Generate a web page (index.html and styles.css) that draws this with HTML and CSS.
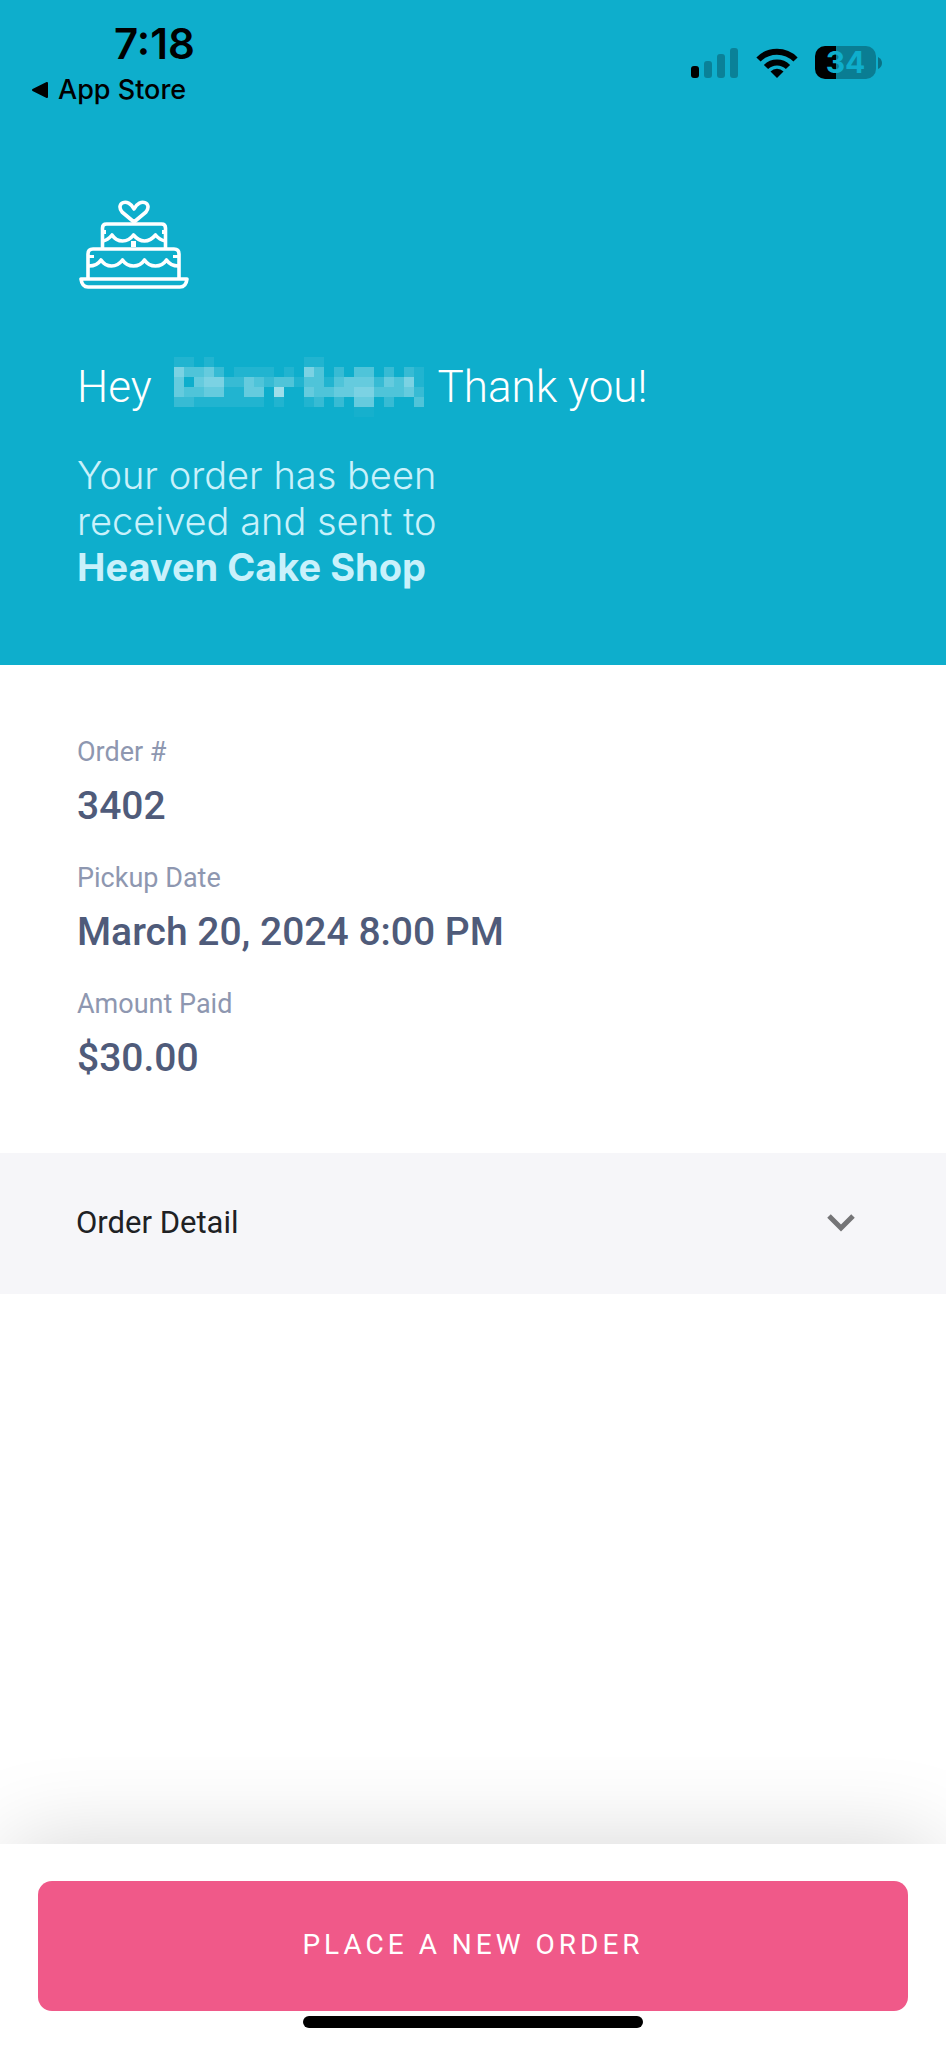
FILE: index.html
```
<!DOCTYPE html>
<html lang="en">
<head>
<meta charset="utf-8">
<meta name="viewport" content="width=device-width, initial-scale=1">
<title>Order received</title>
<link rel="stylesheet" href="styles.css">
</head>
<body>
<div class="page">
  <header class="hero">
    <div class="status">
      <div class="status-left">
        <time class="clock">7:18</time>
        <a class="back" href="#">
          <svg class="back-icon" viewBox="0 0 18 18" aria-hidden="true"><path d="M2 9 16 2v14z" fill="#000" stroke="#000" stroke-width="2" stroke-linejoin="round"/></svg>
          App Store
        </a>
      </div>
      <div class="status-right">
        <svg class="signal" viewBox="0 0 48 30" aria-label="Signal">
          <rect x="0" y="18" width="8" height="12" rx="3"/>
          <g opacity=".25"><rect x="13" y="13" width="8" height="17" rx="3"/><rect x="26" y="6" width="8" height="24" rx="3"/><rect x="39" y="0" width="8" height="30" rx="3"/></g>
        </svg>
        <svg class="wifi" viewBox="0 0 42 30" aria-label="Wi-Fi">
          <g fill="none" stroke="#000" stroke-width="6"><path d="M2.500 11.500a26 26 0 0 1 37 0"/><path d="M10 19a15.500 15.500 0 0 1 22 0"/></g>
          <path d="M21 30l-6.500-6.500a9.200 9.200 0 0 1 13 0z"/>
        </svg>
        <div class="battery">
          <span class="battery-level">34</span>
          <svg class="battery-cap" viewBox="0 0 4 12" aria-hidden="true"><path d="M0 0q4 2 4 6t-4 6z" opacity=".35"/></svg>
        </div>
      </div>
    </div>
    <svg class="cake" viewBox="0 0 110 90" aria-label="Cake">
      <g fill="none" stroke="#fff" stroke-width="3.600" stroke-linejoin="round">
        <path d="M55 22 43 12C36 3 49-3 55 9 61-3 74 3 67 12z"/>
        <path d="M23.500 48V28q0-4 4-4h55q4 0 4 4v20"/>
        <path d="M9 78V54q0-5 5-5h81q5 0 5 5v24"/>
        <path d="M24 41q5-1 9-6 4 6 10.500 6T54.500 35q5 6 11 6t11-6q4 5 10 6"/>
        <path d="M10 66q8 0 12-6 4 6 10.500 6T43.500 60q4 6 11 6t11-6q4 6 11 6t11-6q4 6 12 6"/>
        <path d="M2 79h106q-1 8-7 8H9q-6 0-7-8z"/>
      </g>
      <path fill="#fff" d="M52 41h5v6h-5zM24 30h3v4h-3zM83 30h3v4h-3zM10 55h5v3h-5zM94 55h5v3h-5z"/>
    </svg>
    <h1 class="greeting">
      <span>Hey</span>
      <svg class="masked-name" viewBox="0 0 25 6" role="img" aria-label="Hidden name" shape-rendering="crispEdges">
        <g stroke="#fff" stroke-width="1">
          <path opacity=".08" d="M0 .5h2M3 .5h1M13 .5h2M6 1.500h4M11 1.500h1M24 1.500h1M12 2.500h1M15 2.500h1M24 2.500h1M5 3.500h2M2 4.500h7M10 4.500h1M13 4.500h1"/>
          <path opacity=".03" d="M18 5.500h2"/>
          <path opacity=".17" d="M4 1.500h1M16 1.500h1M21 1.500h1M23 1.500h1M5 2.500h2M9 2.500h1M20 2.500h1M24 3.500h1M0 4.500h2M14 4.500h1M16 4.500h1M21 4.500h1"/>
          <path opacity=".27" d="M1 1.500h2M14 1.500h1M18 1.500h2M8 2.500h1M10 2.500h2M13 2.500h2M16 2.500h1M22 2.500h1M1 3.500h2M14 3.500h2M20 3.500h3M24 4.500h1"/>
          <path opacity=".36" d="M3 1.500h1M0 2.500h1M2 2.500h1M7 2.500h1M17 2.500h3M21 2.500h1M0 3.500h1M3 3.500h2M7 3.500h2M13 3.500h1M16 3.500h2M23 3.500h1M18 4.500h2"/>
          <path opacity=".45" d="M0 1.500h1M13 1.500h1M3 2.500h2M23 2.500h1M18 3.500h2"/>
          <path opacity=".6" d="M10 3.500h1"/>
        </g>
      </svg>
      <span>Thank you!</span>
    </h1>
    <p class="message">Your order has been<br>received and sent to<br><strong>Heaven Cake Shop</strong></p>
  </header>
  <main>
    <dl class="summary">
      <div class="field"><dt>Order #</dt><dd>3402</dd></div>
      <div class="field"><dt>Pickup Date</dt><dd>March 20, 2024 8:00 PM</dd></div>
      <div class="field"><dt>Amount Paid</dt><dd>$30.00</dd></div>
    </dl>
    <button class="detail" type="button" aria-expanded="false">
      <span>Order Detail</span>
      <svg class="chevron" viewBox="0 0 28 18" aria-hidden="true"><path d="M2 2l12 12L26 2" fill="none" stroke="#757577" stroke-width="5"/></svg>
    </button>
  </main>
  <footer class="actions">
    <button class="primary" type="button">PLACE A NEW ORDER</button>
    <div class="home-bar"></div>
  </footer>
</div>
</body>
</html>
```

FILE: styles.css
```
* { box-sizing: border-box; }
body { margin: 0; background: #fff; font-family: Roboto, sans-serif; }
h1, p, dl, dd { margin: 0; }
button { border: 0; font: inherit; cursor: pointer; }
svg { display: block; flex: none; }
.page { min-height: 100vh; display: flex; flex-direction: column; }

.hero { background: #0eaecc; color: #fff; padding: 20px 64px 75px 77px; }
.status { display: flex; justify-content: space-between; margin: 0 0 92px -46px; color: #000; font-family: Inter, sans-serif; }
.clock { display: block; margin-left: 83px; font-size: 42px; line-height: 48px; font-weight: 600; }
.back { display: flex; align-items: center; gap: 9px; margin-top: 4px; font-size: 27px; line-height: 36px; font-weight: 500; color: #000; text-decoration: none; }
.back-icon { width: 18px; height: 18px; }
.status-right { display: flex; align-items: flex-end; height: 59px; gap: 17px; }
.signal { width: 48px; height: 30px; margin-bottom: 1px; }
.wifi { width: 42px; height: 30px; margin-bottom: 1px; }
.battery { display: flex; align-items: center; gap: 2px; }
.battery-level { width: 61px; height: 33px; border-radius: 10px; background: linear-gradient(90deg, #000 34%, #0a7d93 34%); color: #0eaecc; font-size: 30px; line-height: 33px; font-weight: 700; text-align: center; }
.battery-cap { width: 4px; height: 12px; }

.cake { width: 110px; height: 90px; margin-left: 2px; }
.greeting { display: flex; align-items: center; margin-top: 67px; font-size: 44px; line-height: 56px; font-weight: 300; }
.masked-name { width: 250px; height: 60px; margin: 0 14px 0 22px; }
.message { margin-top: 35px; font-family: Inter, sans-serif; font-size: 38px; line-height: 46px; font-weight: 300; color: #c9f1fb; }
.message strong { font-weight: 700; }

.summary { padding: 69px 77px 71px; display: flex; flex-direction: column; gap: 30px; }
.field dt { font-size: 27px; line-height: 36px; color: #8e97b0; }
.field dd { margin-top: 12px; font-size: 39px; line-height: 48px; font-weight: 500; color: #4f5b7a; }

.detail { width: 100%; display: flex; align-items: center; justify-content: space-between; padding: 50px 91px 51px 76px; background: #f6f6f9; color: #202124; font-size: 31px; line-height: 40px; }
.chevron { width: 28px; height: 18px; }

.actions { margin-top: auto; padding: 37px 38px 20px; background: #fff; box-shadow: 0 -10px 90px -10px rgba(0, 0, 0, .17); }
.primary { display: block; width: 100%; padding: 44px 20px 46px; border-radius: 14px; background: #f05989; color: #fff; font-size: 28px; line-height: 40px; letter-spacing: 4px; }
.home-bar { width: 39%; height: 12px; margin: 5px auto 0; border-radius: 6px; background: #000; }
```
